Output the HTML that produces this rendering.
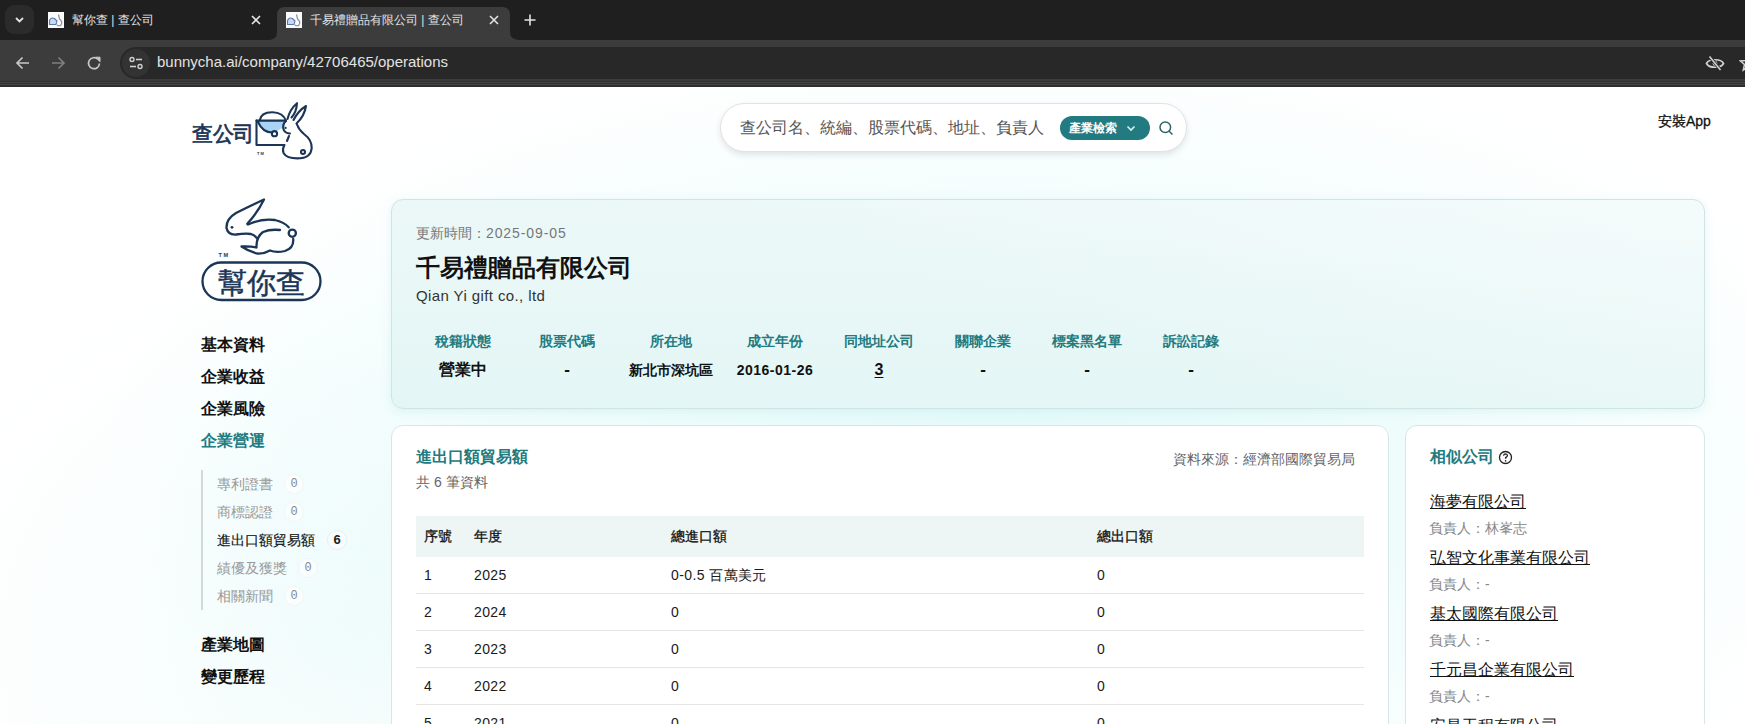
<!DOCTYPE html>
<html><head><meta charset="utf-8">
<style>
*{box-sizing:border-box;margin:0;padding:0}
html,body{width:1745px;height:724px;overflow:hidden;background:#fff;font-family:"Liberation Sans",sans-serif;color:#111}
.abs{position:absolute}
#tabbar{position:absolute;left:0;top:0;width:1745px;height:40px;background:#1f1f1f}
#toolbar{position:absolute;left:0;top:40px;width:1745px;height:47px;background:#3c3c3c}
#page{position:absolute;left:0;top:87px;width:1745px;height:637px;overflow:hidden;background:#fff}
.tabtxt{color:#e3e3e3;font-size:12px;white-space:nowrap}
.nav{font-size:16px;font-weight:bold;color:#111;white-space:nowrap;margin-left:1px}
.sub{font-size:14px;color:#999;white-space:nowrap}
.badge{position:absolute;width:20px;height:20px;border-radius:10px;border:1px solid #f1f3f3;background:rgba(255,255,255,0.5);font-family:"Liberation Mono",monospace;font-size:12px;color:#888;text-align:center;line-height:18px;border-color:#f3f5f5}
.card{position:absolute;border:1px solid #cfe3e3;border-radius:12px}
.lbl{position:absolute;font-size:14px;font-weight:bold;color:#237b80;text-align:center;width:100px;white-space:nowrap}
.val{position:absolute;font-size:14px;font-weight:bold;color:#111;text-align:center;width:100px;white-space:nowrap}
.row{position:absolute;left:0;width:948px;height:37px;border-bottom:1px solid #e6e6e6;font-size:14px;color:#1a1a1a;letter-spacing:0.4px}
.row span{position:absolute;top:10px;white-space:nowrap}
.sim{position:absolute;left:24px;font-size:16px;color:#111;text-decoration:underline;text-underline-offset:1px;white-space:nowrap;margin-top:2px;margin-left:1px}
.simp{position:absolute;left:24px;font-size:14px;color:#888;white-space:nowrap;margin-top:1px}
</style></head><body>
<div id="tabbar">
  <div class="abs" style="left:5px;top:5px;width:29px;height:29px;border-radius:9px;background:#2b2b2b"></div>
  <svg class="abs" style="left:13px;top:13px" width="13" height="13" viewBox="0 0 13 13"><path d="M3 5 L6.5 8.5 L10 5" stroke="#e3e3e3" stroke-width="1.8" fill="none"/></svg>
  <svg class="abs" style="left:48px;top:12px" width="16" height="16" viewBox="0 0 16 16"><rect width="16" height="16" fill="#fafbfd"/><path d="M1.5 8.5 Q3 5 6.5 6.5 L9 9 L8 12.5 L1.5 12.5 Z" fill="#c8d8f0" stroke="#5c78a8" stroke-width="1.1"/><path d="M10.5 2.5 L11.5 7 Q15 9.5 13 13 Q11 14.5 9 13" fill="none" stroke="#8a8f98" stroke-width="1.2"/></svg>
  <div class="abs tabtxt" style="left:72px;top:12px;font-size:12px;line-height:16px">幫你查 | 查公司</div>
  <svg class="abs" style="left:251px;top:15px" width="10" height="10" viewBox="0 0 10 10"><path d="M1 1L9 9M9 1L1 9" stroke="#e3e3e3" stroke-width="1.6"/></svg>
  <!-- active tab -->
  <svg class="abs" style="left:268px;top:7px" width="252" height="33" viewBox="0 0 252 33"><path d="M0 33 Q9 33 9 25 L9 8 Q9 0 17 0 L234 0 Q242 0 242 8 L242 25 Q242 33 252 33 Z" fill="#3c3c3c"/></svg>
  <svg class="abs" style="left:286px;top:12px" width="16" height="16" viewBox="0 0 16 16"><rect width="16" height="16" fill="#fafbfd"/><path d="M1.5 8.5 Q3 5 6.5 6.5 L9 9 L8 12.5 L1.5 12.5 Z" fill="#c8d8f0" stroke="#5c78a8" stroke-width="1.1"/><path d="M10.5 2.5 L11.5 7 Q15 9.5 13 13 Q11 14.5 9 13" fill="none" stroke="#8a8f98" stroke-width="1.2"/></svg>
  <div class="abs tabtxt" style="left:310px;top:12px;font-size:12px;line-height:16px">千易禮贈品有限公司 | 查公司</div>
  <svg class="abs" style="left:489px;top:15px" width="10" height="10" viewBox="0 0 10 10"><path d="M1 1L9 9M9 1L1 9" stroke="#e3e3e3" stroke-width="1.6"/></svg>
  <svg class="abs" style="left:524px;top:14px" width="12" height="12" viewBox="0 0 12 12"><path d="M6 0.5V11.5M0.5 6H11.5" stroke="#e3e3e3" stroke-width="1.6"/></svg>
</div>
<div id="toolbar">
  <svg class="abs" style="left:14px;top:14px" width="18" height="18" viewBox="0 0 18 18"><path d="M15 9H3M8.5 3.5L3 9L8.5 14.5" stroke="#c7c7c7" stroke-width="1.7" fill="none"/></svg>
  <svg class="abs" style="left:49px;top:14px" width="18" height="18" viewBox="0 0 18 18"><path d="M3 9H15M9.5 3.5L15 9L9.5 14.5" stroke="#7f7f7f" stroke-width="1.7" fill="none"/></svg>
  <svg class="abs" style="left:85px;top:14px" width="18" height="18" viewBox="0 0 18 18"><path d="M14.5 9.5A5.5 5.5 0 1 1 12.8 5.2" stroke="#c7c7c7" stroke-width="1.7" fill="none"/><path d="M10.5 3.2H15V7.7Z" fill="#c7c7c7" stroke="#c7c7c7" stroke-width="1"/></svg>
  <div class="abs" style="left:120px;top:7px;width:1700px;height:32px;border-radius:16px;background:#282828"></div>
  <div class="abs" style="left:122px;top:9px;width:28px;height:28px;border-radius:14px;background:#333"></div>
  <svg class="abs" style="left:128px;top:15px" width="16" height="16" viewBox="0 0 16 16"><circle cx="4" cy="4.5" r="2" stroke="#d0d0d0" stroke-width="1.4" fill="none"/><path d="M8 4.5H14" stroke="#d0d0d0" stroke-width="1.6"/><circle cx="12" cy="11.5" r="2" stroke="#d0d0d0" stroke-width="1.4" fill="none"/><path d="M2 11.5H8" stroke="#d0d0d0" stroke-width="1.6"/></svg>
  <div class="abs" style="left:157px;top:13px;font-size:15px;line-height:18px;color:#e3e3e3;white-space:nowrap">bunnycha.ai/company/42706465/operations</div>
  <svg class="abs" style="left:1704px;top:14px" width="22" height="18" viewBox="0 0 22 18"><path d="M2.5 9.5C5 4.5 17 4.5 19.5 9.5C17 14.5 5 14.5 2.5 9.5Z" stroke="#d0d0d0" stroke-width="1.7" fill="none"/><circle cx="11" cy="9.5" r="2.4" fill="#d0d0d0"/><path d="M5.5 2.5L16.5 16" stroke="#282828" stroke-width="3.2"/><path d="M5.5 2.5L16.5 16" stroke="#d0d0d0" stroke-width="1.6"/></svg>
  <svg class="abs" style="left:1739px;top:14px" width="18" height="18" viewBox="0 0 18 18"><path d="M9 1.5L11.2 6.5L16.5 7L12.5 10.5L13.7 16L9 13L4.3 16L5.5 10.5L1.5 7L6.8 6.5Z" stroke="#d0d0d0" stroke-width="1.6" fill="none"/></svg>
  <div class="abs" style="left:0;top:41px;width:1745px;height:1px;background:#2e2e2e"></div>
  <div class="abs" style="left:0;top:42px;width:1745px;height:1px;background:#474747"></div>
  <div class="abs" style="left:0;top:43px;width:1745px;height:1px;background:#2e2e2e"></div>
  <div class="abs" style="left:0;top:44px;width:1745px;height:1px;background:#474747"></div>
  <div class="abs" style="left:0;top:45px;width:1745px;height:2px;background:#2e2e2e"></div>
</div>
<div id="page">
  <div class="abs" style="left:0;top:0;width:1745px;height:637px;background:radial-gradient(ellipse 900px 420px at 1000px 380px,rgba(205,246,246,0.6),rgba(255,255,255,0) 100%),radial-gradient(ellipse 420px 380px at 330px 560px,rgba(215,245,245,0.28),rgba(255,255,255,0) 100%)"></div>
</div>
<!-- header logo -->
<div class="abs" style="left:192px;top:123px;font-size:21px;line-height:21px;color:#1b3556;white-space:nowrap;letter-spacing:-0.5px;-webkit-text-stroke:0.7px #1b3556">查公司</div>
<svg class="abs" style="left:185px;top:95px" width="140" height="70" viewBox="0 0 140 70">
 <g fill="none" stroke="#1b3556" stroke-width="2.1" stroke-linecap="round" stroke-linejoin="round">
  <path d="M73 26 Q80 40 89 37 Q95 35 100 31 L100 26 Z" fill="#a9d4f5" stroke="none"/>
  <path d="M74.5 25.6 Q76 17 87.5 17.2 Q98 17.5 101 25.6"/>
  <path d="M71.5 25.6 H101"/>
  <path d="M71.5 25.6 V50 H99"/>
  <path d="M73 27 Q78 38 88 37.5"/>
  <circle cx="89.5" cy="38.7" r="2.6" fill="#fff"/>
  <path d="M102.5 24 Q105 14 112 8.2 Q111.5 17 106.5 22.5"/>
  <path d="M108.5 25 Q113 16 121 11 Q119.5 21 111.5 28.5"/>
  <path d="M112 29.5 Q114 35 119 39 Q127 45 126.7 53 Q126 62.5 115 63.3 Q102 64 98.5 58 Q97 54 99.5 50"/>
  <path d="M101 26 Q96.5 30 99 35.5 Q101 38.5 105 38.5"/>
  <path d="M104 41 L102 46"/>
  <circle cx="118" cy="57" r="2"/>
 </g>
 <circle cx="100.6" cy="32.9" r="1.1" fill="#1b3556"/>
 <text x="72" y="60" font-size="4" fill="#1b3556" font-family="Liberation Sans" font-weight="bold">T M</text>
</svg>
<!-- search -->
<div class="abs" style="left:720px;top:103px;width:467px;height:49px;border-radius:25px;background:#fff;border:1px solid #e2e2e2;box-shadow:0 3px 6px rgba(0,0,0,0.10)"></div>
<div class="abs" style="left:740px;top:119px;font-size:16px;line-height:18px;color:#555;white-space:nowrap">查公司名、統編、股票代碼、地址、負責人</div>
<div class="abs" style="left:1060px;top:116px;width:90px;height:24px;border-radius:12px;background:#217b80"></div>
<div class="abs" style="left:1069px;top:121px;font-size:12px;line-height:14px;color:#fff;font-weight:bold;white-space:nowrap">產業檢索</div>
<svg class="abs" style="left:1125px;top:122px" width="12" height="12" viewBox="0 0 12 12"><path d="M2.5 4.5L6 8L9.5 4.5" stroke="#d8f4f4" stroke-width="1.6" fill="none"/></svg>
<svg class="abs" style="left:1157px;top:119px" width="18" height="18" viewBox="0 0 18 18"><circle cx="8.3" cy="8.3" r="5.3" stroke="#2c6466" stroke-width="1.5" fill="none"/><path d="M12.2 12.2L15.5 15.5" stroke="#2c6466" stroke-width="1.5"/></svg>
<div class="abs" style="left:1658px;top:113px;font-size:14px;line-height:16px;color:#111;-webkit-text-stroke:0.3px #111;white-space:nowrap">安裝App</div>
<!-- sidebar logo -->
<svg class="abs" style="left:190px;top:190px" width="140" height="120" viewBox="190 190 140 120">
 <g fill="none" stroke="#1b3556" stroke-width="2.3" stroke-linecap="round" stroke-linejoin="round">
  <rect x="202.5" y="262.5" width="118" height="37.5" rx="18.75"/>
  <path d="M247.3 223.8 Q258 212 264 199.5 Q250 206 236 213 Q226 219 226.5 228 Q228 235 236 234.5 Q246 233 251 234 Q255 235 257 238.5"/>
  <path d="M248 224.5 Q262 218 275 220 Q284 222 288.7 227.3"/>
  <circle cx="292.3" cy="233.2" r="3.6"/>
  <path d="M293.2 239 Q294 248 285 251 Q276 253 270 250.5 Q264 254 257 253.5 Q248 251 241.5 246.5 Q250 246 256.5 247.5 Q256 237 263 232 Q270 229 280 230"/>
 </g>
 <circle cx="232" cy="227.3" r="1.4" fill="#1b3556"/>
 <text x="218.5" y="256.5" font-size="5.5" fill="#1b3556" font-family="Liberation Sans" font-weight="bold">T M</text>
</svg>
<div class="abs" style="left:218px;top:269px;font-size:29px;line-height:29px;color:#1b3556;white-space:nowrap;letter-spacing:0px;-webkit-text-stroke:0.5px #1b3556">幫你查</div>
<!-- nav -->
<div class="abs nav" style="left:200px;top:337px;line-height:16px">基本資料</div>
<div class="abs nav" style="left:200px;top:369px;line-height:16px">企業收益</div>
<div class="abs nav" style="left:200px;top:401px;line-height:16px">企業風險</div>
<div class="abs nav" style="left:200px;top:433px;line-height:16px;color:#217b80">企業營運</div>
<div class="abs" style="left:201px;top:470px;width:2px;height:140px;background:#d4d8d8"></div>
<div class="abs sub" style="left:217px;top:477px;line-height:14px">專利證書</div>
<div class="badge" style="left:284px;top:474px">0</div>
<div class="abs sub" style="left:217px;top:505px;line-height:14px">商標認證</div>
<div class="badge" style="left:284px;top:502px">0</div>
<div class="abs sub" style="left:217px;top:533px;line-height:14px;color:#111;-webkit-text-stroke:0.15px #111">進出口額貿易額</div>
<div class="badge" style="left:327px;top:530px;color:#222;font-weight:bold;font-family:'Liberation Sans',sans-serif;font-size:13px;border-color:#eceeee">6</div>
<div class="abs sub" style="left:217px;top:561px;line-height:14px">績優及獲獎</div>
<div class="badge" style="left:298px;top:558px">0</div>
<div class="abs sub" style="left:217px;top:589px;line-height:14px">相關新聞</div>
<div class="badge" style="left:284px;top:586px">0</div>
<div class="abs nav" style="left:200px;top:637px;line-height:16px">產業地圖</div>
<div class="abs nav" style="left:200px;top:669px;line-height:16px">變更歷程</div>
<!-- company card -->
<div class="card" style="left:391px;top:199px;width:1314px;height:210px;background:linear-gradient(200deg,rgba(255,255,255,0.45) 0%,rgba(255,255,255,0) 55%),linear-gradient(180deg,#ecf8f8 0%,#e3f6f5 100%);border-color:#d0e4e4;box-shadow:0 2px 10px rgba(150,220,220,0.25)"></div>
<div class="abs" style="left:416px;top:226px;font-size:14px;line-height:14px;color:#777;white-space:nowrap">更新時間：<span style="letter-spacing:0.9px">2025-09-05</span></div>
<div class="abs" style="left:416px;top:256px;font-size:24px;line-height:24px;color:#111;font-weight:bold;white-space:nowrap">千易禮贈品有限公司</div>
<div class="abs" style="left:416px;top:287px;font-size:15px;line-height:17px;color:#333;white-space:nowrap;letter-spacing:0.4px">Qian Yi gift co., ltd</div>
<div class="lbl" style="left:413px;top:334px;line-height:14px">稅籍狀態</div>
<div class="lbl" style="left:517px;top:334px;line-height:14px">股票代碼</div>
<div class="lbl" style="left:621px;top:334px;line-height:14px">所在地</div>
<div class="lbl" style="left:725px;top:334px;line-height:14px">成立年份</div>
<div class="lbl" style="left:829px;top:334px;line-height:14px">同地址公司</div>
<div class="lbl" style="left:933px;top:334px;line-height:14px">關聯企業</div>
<div class="lbl" style="left:1037px;top:334px;line-height:14px">標案黑名單</div>
<div class="lbl" style="left:1141px;top:334px;line-height:14px">訴訟記錄</div>
<div class="val" style="left:413px;top:362px;line-height:16px;font-size:16px">營業中</div>
<div class="val" style="left:517px;top:362px;line-height:16px;font-size:17px">-</div>
<div class="val" style="left:621px;top:362px;line-height:16px">新北市深坑區</div>
<div class="val" style="left:725px;top:362px;line-height:16px;letter-spacing:0.5px">2016-01-26</div>
<div class="val" style="left:829px;top:362px;line-height:16px;font-size:16px;text-decoration:underline;text-underline-offset:2px">3</div>
<div class="val" style="left:933px;top:362px;line-height:16px;font-size:17px">-</div>
<div class="val" style="left:1037px;top:362px;line-height:16px;font-size:17px">-</div>
<div class="val" style="left:1141px;top:362px;line-height:16px;font-size:17px">-</div>
<!-- trade card -->
<div class="card" style="left:391px;top:425px;width:998px;height:320px;background:#fff;border-color:#d7e7e7"></div>
<div class="abs" style="left:416px;top:449px;font-size:16px;line-height:16px;color:#217b80;font-weight:bold;white-space:nowrap">進出口額貿易額</div>
<div class="abs" style="left:416px;top:475px;font-size:14px;line-height:14px;color:#666;white-space:nowrap">共 6 筆資料</div>
<div class="abs" style="left:1173px;top:452px;font-size:14px;line-height:14px;color:#666;white-space:nowrap">資料來源：經濟部國際貿易局</div>
<div class="abs" style="left:416px;top:516px;width:948px;height:250px">
  <div class="abs" style="left:0;top:0;width:948px;height:41px;background:#edf5f5;font-size:14px;font-weight:500;color:#111;-webkit-text-stroke:0.3px #111">
    <span class="abs" style="left:8px;top:13px;line-height:14px">序號</span>
    <span class="abs" style="left:58px;top:13px;line-height:14px">年度</span>
    <span class="abs" style="left:255px;top:13px;line-height:14px">總進口額</span>
    <span class="abs" style="left:681px;top:13px;line-height:14px">總出口額</span>
  </div>
  <div class="row" style="top:41px"><span style="left:8px">1</span><span style="left:58px">2025</span><span style="left:255px">0-0.5 百萬美元</span><span style="left:681px">0</span></div>
  <div class="row" style="top:78px"><span style="left:8px">2</span><span style="left:58px">2024</span><span style="left:255px">0</span><span style="left:681px">0</span></div>
  <div class="row" style="top:115px"><span style="left:8px">3</span><span style="left:58px">2023</span><span style="left:255px">0</span><span style="left:681px">0</span></div>
  <div class="row" style="top:152px"><span style="left:8px">4</span><span style="left:58px">2022</span><span style="left:255px">0</span><span style="left:681px">0</span></div>
  <div class="row" style="top:189px"><span style="left:8px">5</span><span style="left:58px">2021</span><span style="left:255px">0</span><span style="left:681px">0</span></div>
</div>
<!-- similar card -->
<div class="card" style="left:1405px;top:425px;width:300px;height:320px;background:#fff;border-color:#d7e7e7"></div>
<div class="abs" style="left:1430px;top:449px;font-size:16px;line-height:16px;color:#217b80;font-weight:bold;white-space:nowrap">相似公司</div>
<svg class="abs" style="left:1498px;top:450px" width="15" height="15" viewBox="0 0 15 15"><circle cx="7.5" cy="7.5" r="6" stroke="#222" stroke-width="1.3" fill="none"/><path d="M5.6 5.8Q5.8 3.9 7.6 3.9Q9.4 4 9.4 5.6Q9.4 6.7 7.6 7.6V8.8" stroke="#222" stroke-width="1.3" fill="none"/><circle cx="7.6" cy="10.9" r="0.8" fill="#222"/></svg>
<div class="abs" style="left:1405px;top:425px;width:300px;height:300px">
  <div class="sim" style="top:67px;line-height:16px">海夢有限公司</div>
  <div class="simp" style="top:95px;line-height:14px">負責人：林峯志</div>
  <div class="sim" style="top:123px;line-height:16px">弘智文化事業有限公司</div>
  <div class="simp" style="top:151px;line-height:14px">負責人：-</div>
  <div class="sim" style="top:179px;line-height:16px">基太國際有限公司</div>
  <div class="simp" style="top:207px;line-height:14px">負責人：-</div>
  <div class="sim" style="top:235px;line-height:16px">千元昌企業有限公司</div>
  <div class="simp" style="top:263px;line-height:14px">負責人：-</div>
  <div class="sim" style="top:291px;line-height:16px">安昌工程有限公司</div>
</div>
</body></html>
